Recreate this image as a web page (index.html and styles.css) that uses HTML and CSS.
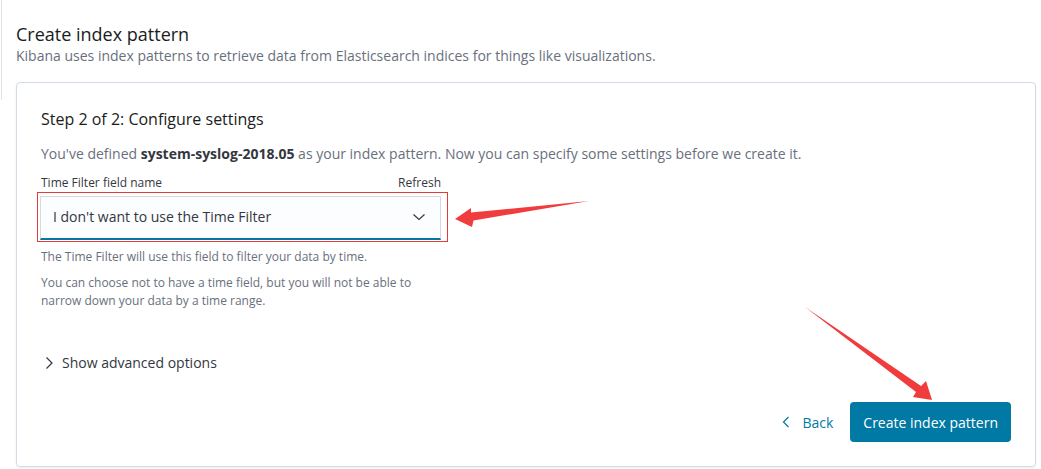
FILE: index.html
```html
<!DOCTYPE html>
<html lang="en">
<head>
<meta charset="utf-8">
<title>Create index pattern</title>
<link rel="stylesheet" href="styles.css">
</head>
<body>
<div class="page">
  <header class="page-header">
    <h1 class="page-title">Create index pattern</h1>
    <p class="page-subtitle">Kibana uses index patterns to retrieve data from Elasticsearch indices for things like visualizations.</p>
  </header>

  <section class="panel">
    <h2 class="step-title">Step 2 of 2: Configure settings</h2>
    <p class="step-desc">You've defined <strong>system-syslog-2018.05</strong> as your index pattern. Now you can specify some settings before we create it.</p>

    <div class="field">
      <div class="field-labels">
        <span class="field-label">Time Filter field name</span>
        <span class="field-label">Refresh</span>
      </div>
      <div class="select-wrap">
        <div class="select">
          <span class="select-value">I don't want to use the Time Filter</span>
          <svg class="select-chevron" width="14" height="14" viewBox="0 0 14 14"><path d="M1.5 4.5 L7 9.5 L12.5 4.5" fill="none" stroke="#343741" stroke-width="1.2"/></svg>
        </div>
        <div class="annot-box"></div>
      </div>
      <p class="help">The Time Filter will use this field to filter your data by time.</p>
      <p class="help">You can choose not to have a time field, but you will not be able to narrow down your data by a time range.</p>
    </div>

    <button class="advanced" type="button">
      <svg width="10" height="14" viewBox="0 0 10 14"><path d="M2.5 1.5 L8 7 L2.5 12.5" fill="none" stroke="#343741" stroke-width="1.2"/></svg>
      <span>Show advanced options</span>
    </button>

    <div class="actions">
      <button class="btn-back" type="button">
        <svg width="10" height="14" viewBox="0 0 10 14"><path d="M7.5 2 L2.5 7 L7.5 12" fill="none" stroke="#0079a5" stroke-width="1.2"/></svg>
        <span>Back</span>
      </button>
      <button class="btn-primary" type="button">Create index pattern</button>
    </div>
  </section>

  <svg class="annotations" width="1041" height="469" viewBox="0 0 1041 469">
    <polygon fill="#f03c3c" points="455,219 471,208 471,212.5 589,201 473.5,220.5 472,227"/>
    <polygon fill="#f03c3c" points="805,307 921,386 926,381 932,400 913,397 916,392"/>
  </svg>
</div>
</body>
</html>
```

FILE: styles.css
```css
* { box-sizing: border-box; }

html, body {
  margin: 0;
  padding: 0;
  background: #ffffff;
}

body {
  font-family: "Open Sans", "Noto Sans", "Liberation Sans", sans-serif;
  color: #343741;
  width: 1041px;
  height: 469px;
  overflow: hidden;
}

.page {
  position: relative;
  padding: 22px 5px 0 16px;
}

.page::before {
  content: "";
  position: absolute;
  left: 1px;
  top: 0;
  width: 1px;
  height: 100px;
  background: #e2e2e2;
}

.page-title {
  margin: 0;
  font-size: 18px;
  line-height: 24px;
  font-weight: 400;
  color: #1a1c21;
}

.page-subtitle {
  margin: 0;
  font-size: 14px;
  line-height: 20px;
  color: #69707d;
}

.panel {
  margin-top: 16px;
  width: 1020px;
  height: 385px;
  border: 1px solid #d3dae6;
  border-radius: 4px;
  box-shadow: 0 1px 2px rgba(0, 0, 0, 0.08);
  padding: 24px 24px 24px 24px;
  display: flex;
  flex-direction: column;
}

.step-title {
  margin: 0;
  font-size: 16px;
  line-height: 24px;
  font-weight: 400;
  color: #1a1c21;
}

.step-desc {
  margin: 13px 0 0;
  font-size: 14px;
  line-height: 20px;
  color: #69707d;
}

.step-desc strong {
  color: #343741;
  font-weight: 700;
}

.field {
  margin-top: 10px;
  width: 400px;
}

.field-labels {
  display: flex;
  justify-content: space-between;
  font-size: 12px;
  line-height: 18px;
  color: #343741;
}

.select-wrap {
  position: relative;
  margin-top: 4px;
}

.select {
  height: 44px;
  width: 401px;
  margin-left: -1px;
  border: 1px solid #d5d9df;
  border-bottom: 2px solid #0079a5;
  background: #fcfdfe;
  display: flex;
  align-items: center;
  justify-content: space-between;
  padding: 0 14px 2px 12px;
}

.select-value {
  font-size: 14px;
  color: #343741;
}

.select-chevron {
  display: block;
}

.annot-box {
  position: absolute;
  left: -4px;
  top: -4px;
  width: 411px;
  height: 50px;
  border: 1px solid #e53a3a;
  pointer-events: none;
}

.help {
  margin: 8px 0 0;
  font-size: 12px;
  line-height: 18px;
  color: #69707d;
}

.advanced {
  margin-top: 43px;
  align-self: flex-start;
  display: flex;
  align-items: center;
  gap: 8px;
  padding: 0 0 0 3px;
  background: none;
  border: 0;
  font-family: inherit;
  font-size: 14px;
  line-height: 20px;
  color: #343741;
}

.advanced svg { display: block; }

.actions {
  margin-top: auto;
  display: flex;
  justify-content: flex-end;
  align-items: center;
  gap: 17px;
}

.btn-back {
  display: flex;
  align-items: center;
  gap: 11px;
  background: none;
  border: 0;
  padding: 0;
  font-family: inherit;
  font-size: 14px;
  color: #0079a5;
}

.btn-back svg { display: block; }

.btn-primary {
  height: 40px;
  padding: 0 13px;
  border: 0;
  border-radius: 4px;
  background: #0079a5;
  color: #ffffff;
  font-family: inherit;
  font-size: 14px;
}

.annotations {
  position: absolute;
  left: 0;
  top: 0;
  pointer-events: none;
}
```
